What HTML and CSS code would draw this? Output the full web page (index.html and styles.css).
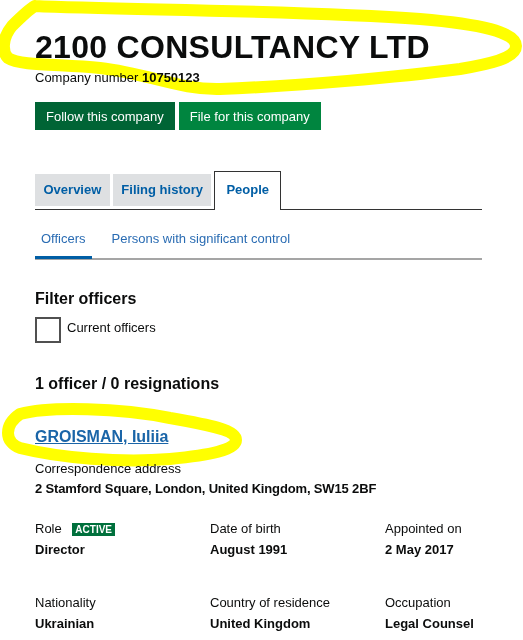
FILE: index.html
```html
<!DOCTYPE html>
<html lang="en">
<head>
  <meta charset="UTF-8">
  <title>2100 CONSULTANCY LTD - People</title>
  <link rel="stylesheet" href="styles.css">
</head>
<body>

  <div class="page">
    <h1 class="company-name">2100 CONSULTANCY LTD</h1>
    <p class="company-number">Company number <strong>10750123</strong></p>

    <div class="actions">
      <a class="button follow-btn" href="#">Follow this company</a>
      <a class="button file-btn" href="#">File for this company</a>
    </div>

    <!-- main tabs -->
    <ul class="tabs">
      <li class="tab"><a href="#">Overview</a></li>
      <li class="tab"><a href="#">Filing history</a></li>
      <li class="tab active"><a href="#">People</a></li>
    </ul>

    <ul class="subtabs">
      <li class="subtab active">Officers</li>
      <li class="subtab">Persons with significant control</li>
    </ul>

    <h2 class="filter-title">Filter officers</h2>
    <label class="checkbox">
      <span class="box"></span>
      <span class="checkbox-label">Current officers</span>
    </label>

    <h2 class="officer-count">1 officer / 0 resignations</h2>

    <!-- appointment -->
    <div class="appointment">
      <h3 class="officer-name"><a href="#">GROISMAN, Iuliia</a></h3>
      <div class="address-label">Correspondence address</div>
      <div class="address">2 Stamford Square, London, United Kingdom, SW15 2BF</div>

      <dl class="details">
        <div class="detail">
          <dt>Role <span class="badge">Active</span></dt>
          <dd>Director</dd>
        </div>
        <div class="detail">
          <dt>Date of birth</dt>
          <dd>August 1991</dd>
        </div>
        <div class="detail">
          <dt>Appointed on</dt>
          <dd>2 May 2017</dd>
        </div>
        <div class="detail">
          <dt>Nationality</dt>
          <dd>Ukrainian</dd>
        </div>
        <div class="detail">
          <dt>Country of residence</dt>
          <dd>United Kingdom</dd>
        </div>
        <div class="detail">
          <dt>Occupation</dt>
          <dd>Legal Counsel</dd>
        </div>
      </dl>
    </div>
  </div>

  <!-- highlighter marks drawn over the page -->
  <svg class="scribble" width="523" height="640" viewBox="0 0 523 640">
    <path d="M 35 6 C 120 10, 300 10, 420 19 C 480 24, 516 32, 516 46 C 516 58, 490 64, 460 69 C 400 77, 300 86, 220 89 C 180 90, 150 74, 100 68 C 60 64, 20 66, 8 58 C 2 52, 2 38, 12 26 C 20 18, 28 10, 35 6"/>
    <path d="M 20 414 C 50 406, 120 408, 170 418 C 210 425, 236 430, 236 440 C 236 450, 210 455, 170 459 C 120 463, 60 458, 20 448 C 4 442, 4 425, 20 414"/>
  </svg>

</body>
</html>
```

FILE: styles.css
```css
body {
  margin: 0;
  font-family: "Liberation Sans", Arial, sans-serif;
  color: #0b0c0c;
  background-color: #fff;
  position: relative;
}

.page {
  padding: 29px 0 0 35px;
  width: 447px;
}

.company-name {
  margin: 0 0 3px;
  font-size: 32px;
  line-height: 36px;
  font-weight: bold;
  letter-spacing: 0.3px;
}

.company-number {
  margin: 0;
  font-size: 13px;
  line-height: 20px;
}

.actions {
  display: flex;
  gap: 4px;
  margin-top: 14px;
}

.button {
  display: block;
  padding: 6px 11px 4px;
  font-size: 13px;
  line-height: 18px;
  color: #fff;
  text-decoration: none;
}

.follow-btn {
  background-color: #006435;
}

.file-btn {
  background-color: #00853f;
}

/* tabs */
.tabs {
  display: flex;
  align-items: flex-end;
  gap: 3px;
  margin: 41px 0 0;
  padding: 0;
  list-style: none;
  border-bottom: 1px solid #333;
}

.tab a {
  display: block;
  height: 32px;
  line-height: 32px;
  padding: 0 8.5px;
  margin-bottom: 3px;
  background-color: #dee0e2;
  color: #005ea5;
  font-size: 13px;
  font-weight: bold;
  text-decoration: none;
}

.tab.active a {
  background-color: #fff;
  border: 1px solid #333;
  border-bottom: none;
  padding: 2px 11px 4px;
  margin-bottom: -1px;
}

.subtabs {
  display: flex;
  gap: 14px;
  margin: 10px 0 0;
  padding: 0;
  list-style: none;
  border-bottom: 2px solid #a5a5a5;
}

.subtab {
  padding: 9px 6px 7px;
  margin-bottom: -1px;
  font-size: 13px;
  line-height: 20px;
  color: #2a6cb3;
  border-bottom: 3px solid transparent;
}

.subtab.active {
  border-bottom-color: #005ea5;
}

/* filter */
.filter-title,
.officer-count {
  margin: 29px 0 0;
  font-size: 16px;
  line-height: 20px;
  font-weight: bold;
}

.officer-count {
  margin-top: 31px;
}

.checkbox {
  display: flex;
  align-items: flex-start;
  gap: 6px;
  margin-top: 8px;
}

.box {
  width: 26px;
  height: 26px;
  box-sizing: border-box;
  border: 2px solid #505050;
}

.checkbox-label {
  padding-top: 1px;
  font-size: 13px;
  line-height: 20px;
}

/* officer */
.officer-name {
  margin: 33px 0 0;
  font-size: 16px;
  line-height: 20px;
}

.officer-name a {
  color: #1a65a8;
}

.address-label {
  margin-top: 12px;
  font-size: 13px;
  line-height: 20px;
}

.address {
  font-size: 13px;
  line-height: 20px;
  font-weight: bold;
  letter-spacing: -0.15px;
}

.details {
  display: grid;
  grid-template-columns: 175px 175px auto;
  row-gap: 33px;
  margin: 20px 0 0;
}

.details dt {
  font-size: 13px;
  line-height: 20px;
}

.details dd {
  margin: 1px 0 0;
  font-size: 13px;
  line-height: 20px;
  font-weight: bold;
}

.badge {
  display: inline-block;
  margin-left: 7px;
  padding: 0 3px;
  background-color: #00703c;
  color: #fff;
  font-size: 10px;
  line-height: 13px;
  font-weight: bold;
  text-transform: uppercase;
}

/* yellow marker */
.scribble {
  position: absolute;
  top: 0;
  left: 0;
  pointer-events: none;
  mix-blend-mode: multiply;
}

.scribble path {
  fill: none;
  stroke: #ffff00;
  stroke-width: 12;
  stroke-linecap: round;
  stroke-linejoin: round;
}
```
